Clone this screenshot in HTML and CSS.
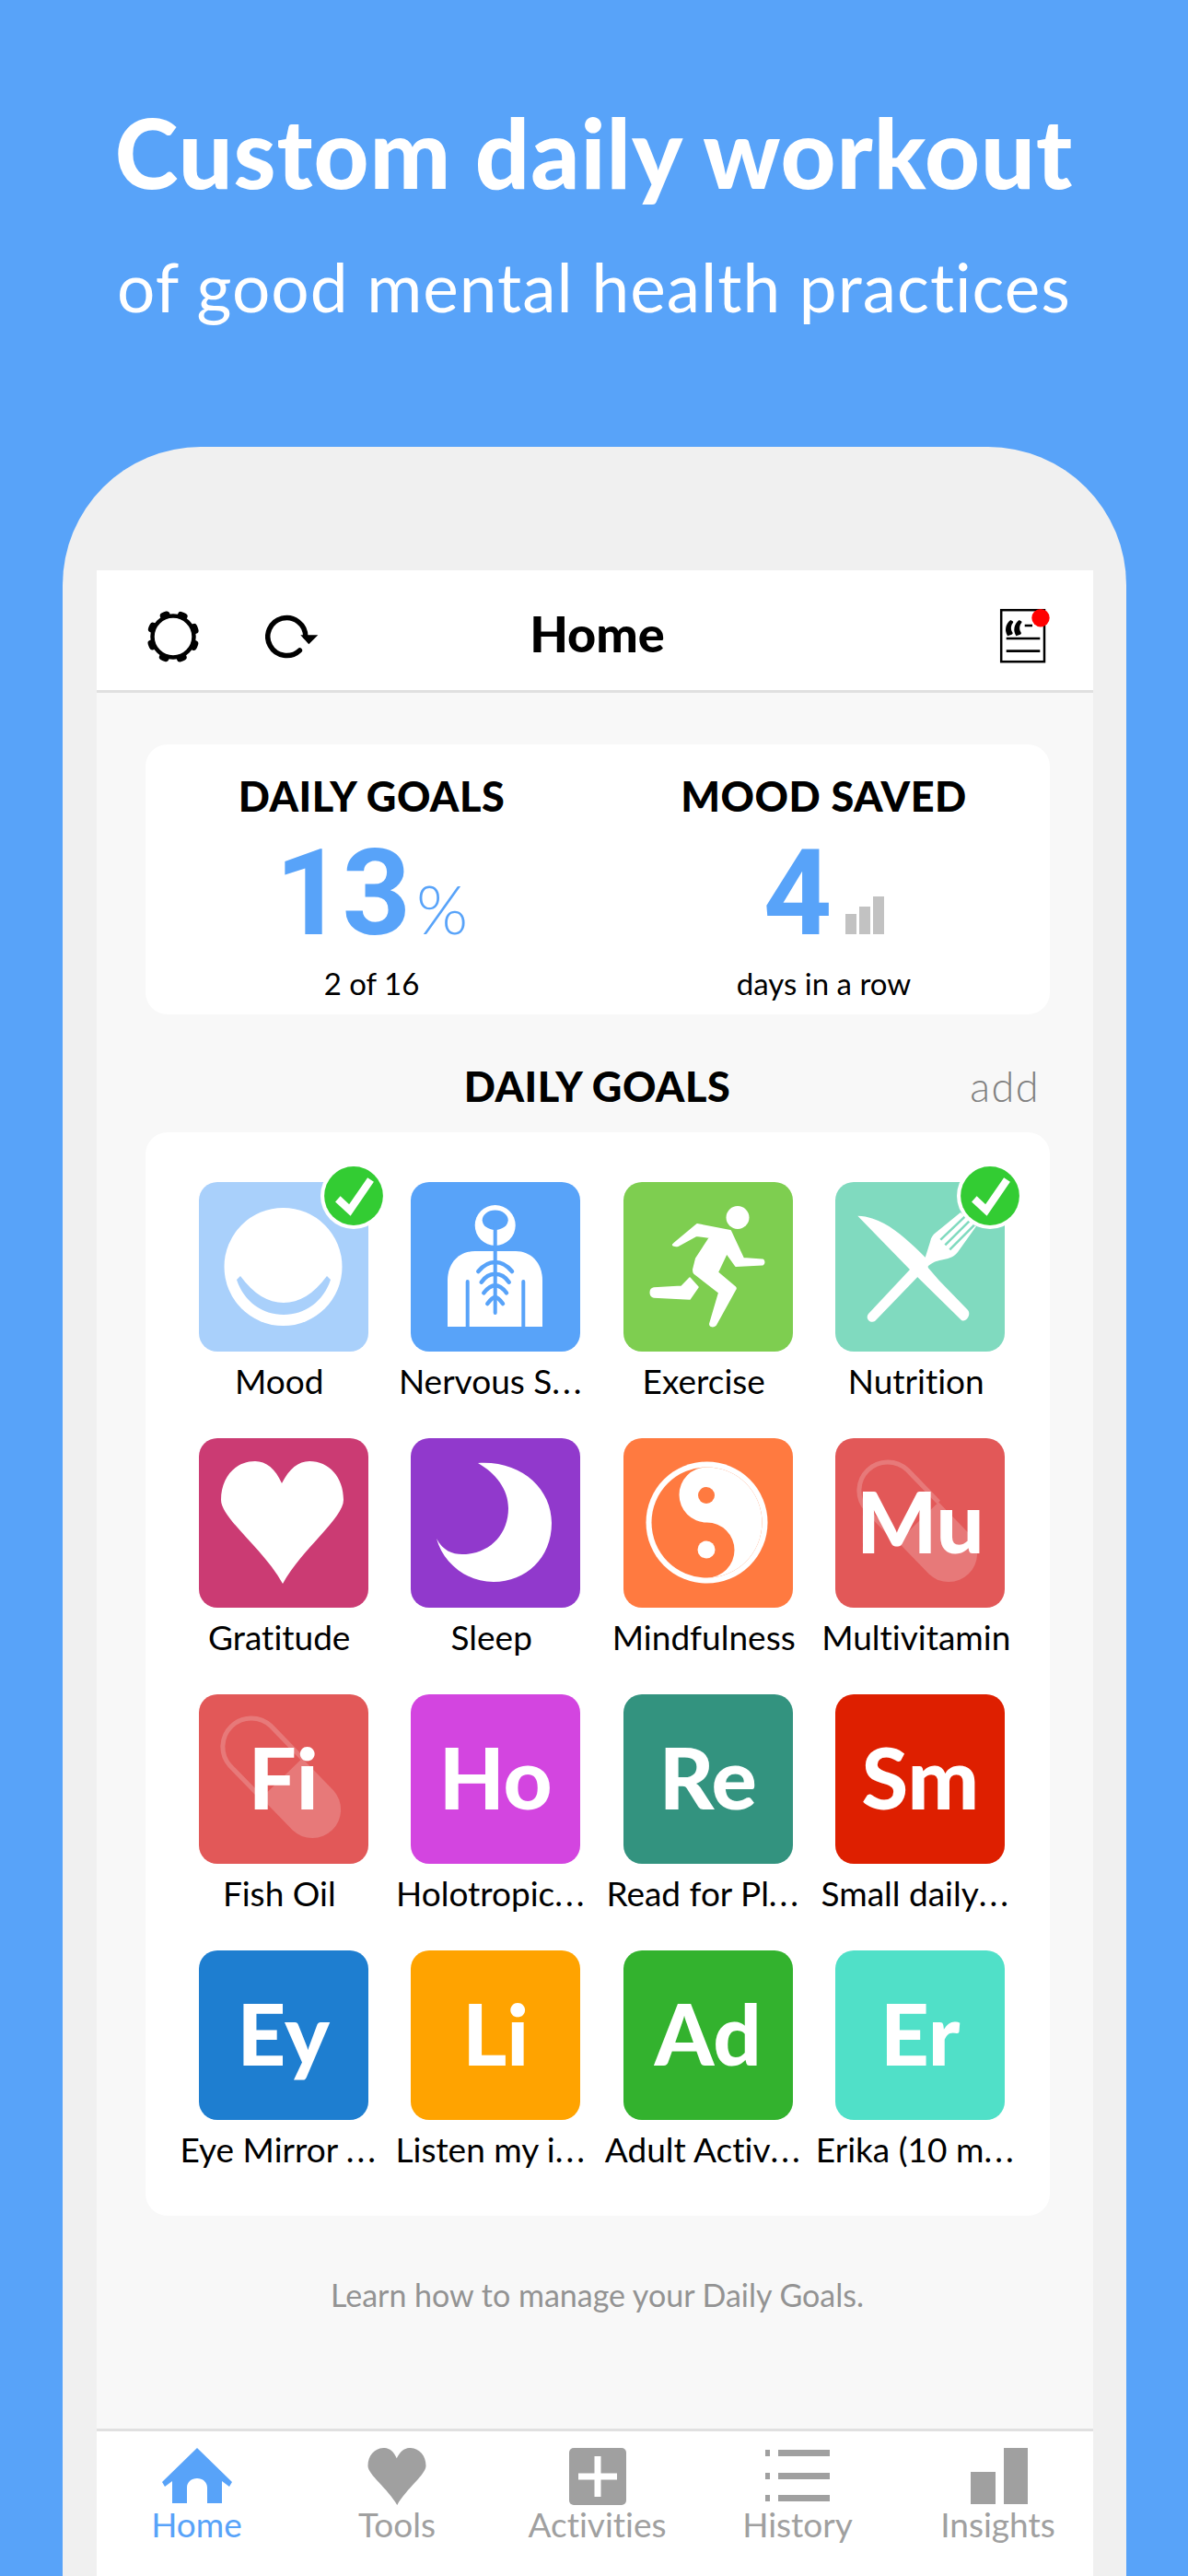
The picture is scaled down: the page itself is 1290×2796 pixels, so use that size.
FILE: index.html
```html
<!DOCTYPE html>
<html lang="en">
<head>
<meta charset="utf-8">
<title>Home</title>
<link rel="stylesheet" href="styles.css">
</head>
<body>
<header class="promo">
  <h1 class="promo-title">Custom daily workout</h1>
  <p class="promo-sub">of good mental health practices</p>
</header>
<div class="phone">
  <main class="screen">
    <nav class="topbar">
      <div class="topbar-left">
        <svg class="ic-gear" viewBox="0 0 58 58"><circle cx="29" cy="29" r="22.500" fill="none" stroke="#000" stroke-width="4.500"/><circle cx="29" cy="29" r="25" fill="none" stroke="#000" stroke-width="7" stroke-linecap="round" stroke-dasharray="4 15.635" stroke-dashoffset="-7.820"/></svg>
        <svg class="ic-refresh" viewBox="0 0 58 50"><path d="M37.400 39.900A20.500 20.500 0 1 1 43.800 25" fill="none" stroke="#000" stroke-width="5.500" stroke-linecap="round"/><path d="M38.300 23.300h19l-10 10z" fill="#000"/></svg>
      </div>
      <div class="topbar-title">Home</div>
      <svg class="ic-doc" viewBox="0 0 56 62"><rect x="1.200" y="2.200" width="46.800" height="56" fill="#fff" stroke="#000" stroke-width="2.500"/><text class="doc-quote" x="4" y="55">“</text><path d="M26.700 19H35M6.700 33h36.600M6.700 46.700h36.600" stroke="#000" stroke-width="2.700"/><circle cx="44" cy="10.700" r="9.700" fill="#f00"/></svg>
    </nav>

    <section class="stats">
      <div class="stat">
        <div class="stat-head">DAILY GOALS</div>
        <div class="stat-num">13<span class="stat-pct">%</span></div>
        <div class="stat-sub">2 of 16</div>
      </div>
      <div class="stat">
        <div class="stat-head">MOOD SAVED</div>
        <div class="stat-num">4<svg class="ic-minibars" viewBox="0 0 42 41"><path d="M0 19h12v22H0zM15 11h12v30H15zM30 0h12v41H30z" fill="#c2c2c2"/></svg></div>
        <div class="stat-sub">days in a row</div>
      </div>
    </section>

    <div class="section-head">
      <h2 class="section-title">DAILY GOALS</h2>
      <span class="section-add">add</span>
    </div>

    <section class="goals">
      <div class="goal">
        <div class="tile c-mood">
          <svg class="tile-art" viewBox="0 0 184 184"><circle cx="91.500" cy="92" r="64" fill="#fff"/><path d="M41 106l4-4c15 20 30 29 47 29s32-9 47-29l4 4c-8 24-28 38-51 38s-43-14-51-38z" fill="#a9d0fb"/></svg>
          <svg class="check" viewBox="0 0 70 70"><circle cx="35" cy="35" r="35" fill="#fff"/><circle cx="35" cy="35" r="31" fill="#33cc33"/><path d="M18.300 38.300L31 50 53 18" fill="none" stroke="#fff" stroke-width="8"/></svg>
        </div>
        <div class="goal-label">Mood</div>
      </div>
      <div class="goal">
        <div class="tile c-nerve">
          <svg class="tile-art" viewBox="0 0 184 184"><circle cx="91.700" cy="47" r="22" fill="#fff"/><path d="M40 157v-50c0-20 13-32 30-32h44c16 0 29 12 29 32v50z" fill="#fff"/><ellipse cx="91.700" cy="41.300" rx="14" ry="10.700" fill="#58a3f9"/><g fill="none" stroke="#58a3f9" stroke-linecap="round"><path d="M91.700 45v97M61.700 108v50M122.300 108v50" stroke-width="4"/><path d="M73.300 97c5-6 11-10 18.400-10s13.400 4 18.300 10M76.700 108.700c4-6 9-9 15-9s11 3 15 9M79.300 120.300c4-5 8-8 12.400-8s8.400 3 12.300 8M83.300 132c3-4 5.500-7 8.400-7s5.400 3 8.300 7" stroke-width="4.500"/></g></svg>
        </div>
        <div class="goal-label">Nervous S<span class="ell">...</span></div>
      </div>
      <div class="goal">
        <div class="tile c-exercise">
          <svg class="tile-art" viewBox="0 0 184 184"><circle cx="124" cy="38.500" r="12.500" fill="#fff"/><path d="M56 66L80 46l36 7 14 30 21 1.500c2 1 2 4 0 5L122 91 112 77 102 98l19 16c1 1 1 2 0 3L100 155c-2 2-6 2-6-1l10-34-27-21c-1-1-1-2-1-4l3-12 15-23-15-2-20 11c-3 1-6-1-5-1z" fill="#fff" stroke="#fff" stroke-width="2" stroke-linejoin="round"/><path d="M72 104l9 10-9 13-39-2c-5-1-5-9 0-10l30-1.700z" fill="#fff" stroke="#fff" stroke-width="1.500" stroke-linejoin="round"/></svg>
        </div>
        <div class="goal-label">Exercise</div>
      </div>
      <div class="goal">
        <div class="tile c-food">
          <svg class="tile-art" viewBox="0 0 184 184"><path d="M24.300 36.700C36 37 45 41 53 45C68 53 84 68 97.700 81.700L101 93.300L112.700 106.700L144 139C148 144 142 153 137 150L81 95Z" fill="#fff"/><path d="M36 143L81 95L97.700 81.700C100 75 102 68 103 65C104 60 106 57 109 55L136 33L153 48L133 76C129 81 124 83 118 84C110 85 104 88 99 93L43 151C38 154 32 148 36 143Z" fill="#fff"/><path d="M114.300 62.700L141.700 36.700M119.300 68.300L146.300 41.700M124.300 73.300L151 46.700" stroke="#80dabf" stroke-width="2.500"/></svg>
          <svg class="check" viewBox="0 0 70 70"><circle cx="35" cy="35" r="35" fill="#fff"/><circle cx="35" cy="35" r="31" fill="#33cc33"/><path d="M18.300 38.300L31 50 53 18" fill="none" stroke="#fff" stroke-width="8"/></svg>
        </div>
        <div class="goal-label">Nutrition</div>
      </div>

      <div class="goal">
        <div class="tile c-heart">
          <svg class="tile-art" viewBox="0 0 184 184"><path d="M90 49C83 33 73 25 61 25C40 25 24 42 24 67C24 87 70 120 91 158C112 120 157 87 157 67C157 42 141 25 120 25C108 25 98 33 90 49Z" fill="#fff"/></svg>
        </div>
        <div class="goal-label">Gratitude</div>
      </div>
      <div class="goal">
        <div class="tile c-sleep">
          <svg class="tile-art" viewBox="0 0 184 184"><path d="M73 27C120 24 153 55 153 92C153 130 125 156 90 156C60 156 35 135 28 109C35 122 45 126 56 126C85 126 106 105 106 76C106 55 92 38 73 27Z" fill="#fff"/></svg>
        </div>
        <div class="goal-label">Sleep</div>
      </div>
      <div class="goal">
        <div class="tile c-mind">
          <svg class="tile-art" viewBox="0 0 184 184"><circle cx="90.500" cy="91.500" r="66" fill="#fff"/><circle cx="90.500" cy="91.500" r="60" fill="#ff7a40"/><path d="M90.500 31.500a30 30 0 0 0 0 60a30 30 0 0 1 0 60a60 60 0 0 0 0-120z" fill="#fff"/><circle cx="90" cy="62" r="9" fill="#ff7a40"/><circle cx="90" cy="121" r="9.500" fill="#fff"/></svg>
        </div>
        <div class="goal-label">Mindfulness</div>
      </div>
      <div class="goal">
        <div class="tile c-pill">
          <svg class="tile-art" viewBox="0 0 184 184"><path d="M67.800 112.600L33.800 77.600A31 31 0 0 1 78.200 34.400L112.200 69.400" fill="none" stroke="#fff" stroke-opacity=".2" stroke-width="5"/><path d="M112.200 69.400L146.200 104.400A31 31 0 0 1 101.800 147.600L67.800 112.600z" fill="#fff" fill-opacity=".2"/></svg>
          <span class="tile-letters">Mu</span>
        </div>
        <div class="goal-label">Multivitamin</div>
      </div>

      <div class="goal">
        <div class="tile c-pill">
          <svg class="tile-art" viewBox="0 0 184 184"><path d="M67.800 112.600L33.800 77.600A31 31 0 0 1 78.200 34.400L112.200 69.400" fill="none" stroke="#fff" stroke-opacity=".2" stroke-width="5"/><path d="M112.200 69.400L146.200 104.400A31 31 0 0 1 101.800 147.600L67.800 112.600z" fill="#fff" fill-opacity=".2"/></svg>
          <span class="tile-letters">Fi</span>
        </div>
        <div class="goal-label">Fish Oil</div>
      </div>
      <div class="goal">
        <div class="tile c-holo"><span class="tile-letters">Ho</span></div>
        <div class="goal-label">Holotropic<span class="ell">...</span></div>
      </div>
      <div class="goal">
        <div class="tile c-read"><span class="tile-letters">Re</span></div>
        <div class="goal-label">Read for Pl<span class="ell">...</span></div>
      </div>
      <div class="goal">
        <div class="tile c-small"><span class="tile-letters">Sm</span></div>
        <div class="goal-label">Small daily<span class="ell">...</span></div>
      </div>

      <div class="goal">
        <div class="tile c-eye"><span class="tile-letters">Ey</span></div>
        <div class="goal-label">Eye Mirror <span class="ell">...</span></div>
      </div>
      <div class="goal">
        <div class="tile c-listen"><span class="tile-letters">Li</span></div>
        <div class="goal-label">Listen my i<span class="ell">...</span></div>
      </div>
      <div class="goal">
        <div class="tile c-adult"><span class="tile-letters">Ad</span></div>
        <div class="goal-label">Adult Activ<span class="ell">...</span></div>
      </div>
      <div class="goal">
        <div class="tile c-erika"><span class="tile-letters">Er</span></div>
        <div class="goal-label">Erika (10 m<span class="ell">...</span></div>
      </div>
    </section>

    <p class="hint">Learn how to manage your Daily Goals.</p>

    <nav class="tabbar">
      <div class="tab tab-active">
        <svg class="tab-icon" viewBox="0 0 76 62"><path d="M38 0L76 37L73 42L65 36V60H49V43C49 37 44 33 38 33S27 37 27 43V60H11V36L3 42L0 37Z" fill="#58a3f9"/></svg>
        <span class="tab-label">Home</span>
      </div>
      <div class="tab">
        <svg class="tab-icon" viewBox="0 0 76 62"><path transform="translate(-4.900 -11.700) scale(.474 .467)" d="M90 49C83 33 73 25 61 25C40 25 24 42 24 67C24 87 70 120 91 158C112 120 157 87 157 67C157 42 141 25 120 25C108 25 98 33 90 49Z" fill="#a0a0a0"/></svg>
        <span class="tab-label">Tools</span>
      </div>
      <div class="tab">
        <svg class="tab-icon" viewBox="0 0 76 62"><rect x="7" y="0" width="62" height="62" rx="5" fill="#a0a0a0"/><path d="M38 9v44M17 31h42" stroke="#fff" stroke-width="7"/></svg>
        <span class="tab-label">Activities</span>
      </div>
      <div class="tab">
        <svg class="tab-icon" viewBox="0 0 76 62"><path d="M3 2h5v7H3zM17 2h56v7H17zM3 27h5v7H3zM17 27h56v7H17zM3 51h5v7H3zM17 51h56v7H17z" fill="#a0a0a0"/></svg>
        <span class="tab-label">History</span>
      </div>
      <div class="tab">
        <svg class="tab-icon" viewBox="0 0 76 62"><path d="M8 26h27v35H8zM44 0h26v61H44z" fill="#a0a0a0"/></svg>
        <span class="tab-label">Insights</span>
      </div>
    </nav>
  </main>
</div>
</body>
</html>
```
FILE: styles.css
```css
* { box-sizing: border-box; }
html, body { margin: 0; padding: 0; }
body {
  width: 1290px;
  height: 2796px;
  overflow: hidden;
  background: #58a3f9;
  font-family: "Lato", "Open Sans", sans-serif;
  font-variant-ligatures: none;
  color: #000;
  display: flex;
  flex-direction: column;
}
.promo {
  height: 485px;
  padding-top: 105px;
  color: #fff;
  text-align: center;
}
.promo-title {
  margin: 0;
  font-size: 104px;
  line-height: 120px;
  font-weight: 900;
  letter-spacing: 1px;
}
.promo-sub {
  margin: 41px 0 0;
  font-size: 73px;
  line-height: 90px;
  font-weight: 400;
  letter-spacing: 1px;
}
.phone {
  flex: 1;
  margin: 0 67px 0 68px;
  padding: 134px 36px 0 37px;
  background: #f0f0f0;
  border-radius: 150px 150px 0 0;
  display: flex;
  min-height: 0;
}
.screen {
  flex: 1;
  background: #f8f8f8;
  display: flex;
  flex-direction: column;
  min-width: 0;
}
.topbar {
  height: 133px;
  background: #fff;
  border-bottom: 3px solid #e0e0e0;
  position: relative;
  display: flex;
  align-items: center;
  justify-content: space-between;
  padding: 14px 45px 0 54px;
}
.topbar-left { display: flex; align-items: center; gap: 71px; }
.ic-gear { width: 58px; height: 58px; display: block; }
.ic-refresh { width: 58px; height: 50px; display: block; }
.ic-doc { width: 56px; height: 62px; display: block; overflow: visible; }
.doc-quote { font-size: 54px; font-weight: 900; fill: #000; }
.topbar-title {
  position: absolute;
  left: 5px;
  right: 0;
  margin-top: -6px;
  text-align: center;
  font-size: 54px;
  line-height: 60px;
  font-weight: 900;
  pointer-events: none;
}
.stats {
  margin: 56px 47px 0 53px;
  height: 293px;
  background: #fff;
  border-radius: 24px;
  display: grid;
  grid-template-columns: 1fr 1fr;
  text-align: center;
}
.stat { padding-top: 31px; }
.stat-head {
  font-size: 45px;
  line-height: 50px;
  font-weight: 900;
  letter-spacing: .5px;
}
.stat-num {
  height: 130px;
  margin-top: 16px;
  color: #58a3f9;
  font-family: "Roboto", "Lato", sans-serif;
  font-size: 130px;
  line-height: 130px;
  font-weight: 700;
  letter-spacing: -2px;
  display: flex;
  justify-content: center;
  align-items: baseline;
}
.stat-pct {
  font-family: "Lato", sans-serif;
  font-size: 72px;
  font-weight: 300;
  line-height: 62px;
  letter-spacing: 0;
  margin-left: 8px;
}
.ic-minibars { width: 42px; height: 41px; margin: 0 0 3px 17px; }
.stat-sub {
  margin-top: 12px;
  font-size: 33px;
  line-height: 40px;
}
.section-head {
  height: 128px;
  padding: 28px 0 0 5px;
  position: relative;
  display: flex;
  align-items: center;
  justify-content: center;
}
.section-title {
  margin: 0;
  font-size: 45px;
  line-height: 50px;
  font-weight: 900;
  letter-spacing: .5px;
}
.section-add {
  position: absolute;
  right: 58px;
  color: #808080;
  font-size: 45px;
  line-height: 50px;
  font-weight: 300;
  letter-spacing: 1.500px;
}
.goals {
  margin: 0 47px 0 53px;
  height: 1176px;
  padding: 54px 30px 0;
  background: #fff;
  border-radius: 24px;
  display: grid;
  grid-template-columns: repeat(4, 1fr);
  grid-auto-rows: 278px;
}
.goal {
  display: flex;
  flex-direction: column;
  align-items: center;
  min-width: 0;
}
.tile {
  width: 184px;
  height: 184px;
  margin-left: 9px;
  padding-bottom: 5px;
  border-radius: 20px;
  position: relative;
  display: flex;
  align-items: center;
  justify-content: center;
  flex: none;
}
.tile-art { position: absolute; inset: 0; width: 184px; height: 184px; }
.tile-letters {
  position: relative;
  color: #fff;
  font-size: 92px;
  line-height: 90px;
  font-weight: 900;
}
.check {
  position: absolute;
  width: 72px;
  height: 72px;
  top: -21px;
  right: -20px;
}
.goal-label {
  margin-top: 9px;
  font-size: 37px;
  line-height: 46px;
  white-space: nowrap;
}
.ell { letter-spacing: 3px; }
.c-mood { background: #a9d0fb; }
.c-nerve { background: #58a3f9; }
.c-exercise { background: #7ece50; }
.c-food { background: #80dabf; }
.c-heart { background: #cb3b73; }
.c-sleep { background: #9139cc; }
.c-mind { background: #ff7a40; }
.c-pill { background: #e25858; }
.c-holo { background: #d345e0; }
.c-read { background: #33937f; }
.c-small { background: #de1f00; }
.c-eye { background: #1e7ed0; }
.c-listen { background: #ffa300; }
.c-adult { background: #33b22e; }
.c-erika { background: #50e0c8; }
.hint {
  margin: 66px 0 0;
  padding-left: 5px;
  text-align: center;
  color: #939393;
  font-size: 34px;
  line-height: 40px;
}
.tabbar {
  margin-top: auto;
  height: 160px;
  background: #fff;
  border-top: 3px solid #e0e0e0;
  display: grid;
  grid-template-columns: repeat(5, 217.500px);
  justify-content: center;
  padding: 18px 0 0 5px;
}
.tab {
  display: flex;
  flex-direction: column;
  align-items: center;
  color: #a0a0a0;
}
.tab-active { color: #58a3f9; }
.tab-icon { width: 76px; height: 62px; display: block; }
.tab-label {
  margin-top: -1px;
  font-size: 37px;
  line-height: 44px;
}
```
